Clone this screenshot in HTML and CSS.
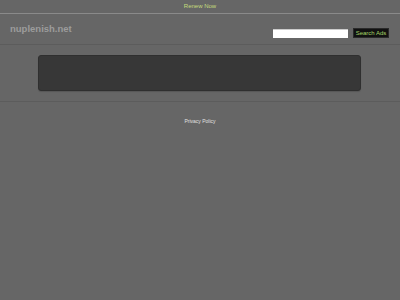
FILE: index.html
```html
<!DOCTYPE html>
<html>
<head>
<meta charset="utf-8">
<title>nuplenish.net</title>
<link rel="stylesheet" href="styles.css">
</head>
<body>
<div class="topbar"><a class="renew" href="#">Renew Now</a></div>
<div class="header">
  <div class="logo">nuplenish.net</div>
  <form class="search">
    <input class="search-input" type="text">
    <button class="search-btn" type="button">Search Ads</button>
  </form>
</div>
<div class="main">
  <div class="box"></div>
</div>
<div class="footer"><a class="privacy" href="#">Privacy Policy</a></div>
</body>
</html>
```
FILE: styles.css
```css
html, body {
  margin: 0;
  padding: 0;
  background: #666666;
  font-family: "Liberation Sans", Arial, sans-serif;
}
.topbar {
  height: 13px;
  font-size: 6px;
  line-height: 13px;
  text-align: center;
  border-bottom: 1px solid #8a8a8a;
}
.renew {
  color: #c4dc7c;
  text-decoration: none;
}
.header {
  display: flex;
  justify-content: space-between;
  height: 30px;
  padding: 0 11px 0 10px;
  border-bottom: 1px solid #5c5c5c;
}
.logo {
  padding-top: 9px;
  font-size: 9.5px;
  font-weight: bold;
  color: #9c9c9c;
  line-height: 12px;
}
.search {
  display: flex;
  align-items: center;
  gap: 5px;
  margin: 14px 0 0 0;
  height: 10px;
}
.search-input {
  box-sizing: border-box;
  width: 75px;
  height: 9px;
  margin: 0;
  padding: 0;
  border: none;
  border-top: 1px solid #ccc;
  background: #ffffff;
}
.search-btn {
  box-sizing: border-box;
  width: 36px;
  height: 10px;
  margin: 0;
  padding: 0;
  border: 1px solid #2a2a2a;
  background: #111111;
  color: #a6d468;
  font-family: "Liberation Sans", Arial, sans-serif;
  font-size: 6px;
  line-height: 8px;
}
.main {
  padding: 10px 39px 10px 38px;
  border-bottom: 1px solid #5c5c5c;
}
.box {
  height: 34px;
  background: #373737;
  border: 1px solid #2f2f2f;
  border-radius: 3px;
  box-shadow: 0 1px 1px rgba(0,0,0,0.15);
}
.footer {
  text-align: center;
  padding-top: 16px;
  font-size: 5px;
  line-height: 6px;
}
.privacy {
  color: #e0e0e0;
}
```
